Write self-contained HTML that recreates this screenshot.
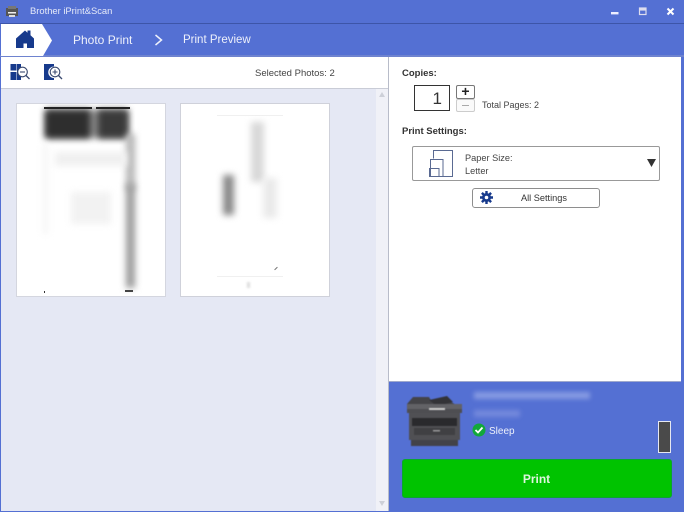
<!DOCTYPE html>
<html><head><meta charset="utf-8">
<style>
html,body{margin:0;padding:0}
body{width:684px;height:512px;position:relative;overflow:hidden;background:#5470d3;font-family:"Liberation Sans",sans-serif;color:#333}
.a{position:absolute}
.t{position:absolute;white-space:nowrap;font-size:10px;line-height:12px}
.b{filter:blur(3.5px)}
</style></head><body>
<div class="a" style="left:0;top:23px;width:684px;height:1px;background:#3d55a8"></div>
<svg class="a" style="left:5px;top:5px" width="14" height="14" viewBox="0 0 14 14"><rect x="1" y="3" width="12" height="8" fill="#555"/><rect x="3" y="1" width="8" height="3" fill="#777"/><rect x="3" y="7" width="8" height="1.5" fill="#eee"/><rect x="4" y="10" width="6" height="2" fill="#ddd"/></svg>
<div class="t" style="left:30px;top:5px;color:#e6eaf8;font-size:9.4px">Brother iPrint&amp;Scan</div>
<svg class="a" style="left:610px;top:5px" width="70" height="14" viewBox="0 0 70 14"><rect x="1" y="7" width="7.500" height="2.400" fill="#eef"/><rect x="29.500" y="3" width="6.500" height="6.500" fill="none" stroke="#dde" stroke-width="1.200"/><rect x="29.500" y="3" width="6.500" height="2.600" fill="#dde"/><path d="M57.500 3.500l6 6M63.500 3.500l-6 6" stroke="#fff" stroke-width="2"/></svg>

<div class="a" style="left:0;top:55px;width:684px;height:2px;background:#6e83cf"></div>
<svg class="a" style="left:0;top:24px" width="54" height="33" viewBox="0 0 54 33"><path d="M1 0H42L52 16.500L43 32H1Z" fill="#fff"/></svg>
<svg class="a" style="left:15px;top:29px" width="20" height="20" viewBox="0 0 20 20"><path d="M1 9.500L10 1.500L12.500 3.700V1.500H15.500V6.300L19 9.500V19H12V14.500H8.500V19H1Z" fill="#173a8c"/></svg>
<div class="t" style="left:73px;top:32px;color:#eef1fb;font-size:12px;line-height:16px">Photo Print</div>
<svg class="a" style="left:153px;top:33px" width="12" height="14" viewBox="0 0 12 14"><path d="M2.500 2L8.500 7L2.500 12" fill="none" stroke="#eef1fb" stroke-width="1.500"/></svg>
<div class="t" style="left:183px;top:32px;color:#eef1fb;font-size:11.500px;line-height:16px">Print Preview</div>

<div class="a" style="left:1px;top:57px;width:387px;height:31px;background:#fff;border-bottom:1px solid #c9ccd6"></div>
<div class="a" style="left:1px;top:89px;width:387px;height:422px;background:#e5e8f4"></div>
<div class="a" style="left:376px;top:89px;width:12px;height:422px;background:#f0f1f7"></div>
<div class="a" style="left:388px;top:57px;width:1px;height:454px;background:#b8bcc9"></div>
<svg class="a" style="left:377px;top:90px" width="10" height="422" viewBox="0 0 10 422"><path d="M2 7L5 2L8 7Z" fill="#cdd0d8"/><path d="M2 411L8 411L5 416Z" fill="#cdd0d8"/></svg>

<svg class="a" style="left:10px;top:63px" width="20" height="18" viewBox="0 0 20 18"><rect x="0.500" y="1" width="6" height="6.500" fill="#173a8c"/><rect x="0.500" y="9" width="6" height="8" fill="#173a8c"/><rect x="7" y="1" width="4" height="16" fill="#173a8c"/><circle cx="12.500" cy="9" r="4.800" fill="#fff" stroke="#39496f" stroke-width="1.100"/><path d="M10 9H15" stroke="#39496f" stroke-width="1.100"/><path d="M16 12.500L19.500 16" stroke="#39496f" stroke-width="1.300"/></svg>
<svg class="a" style="left:44px;top:63px" width="20" height="18" viewBox="0 0 20 18"><path d="M0 1H10V3.500A5.500 5.500 0 0 0 10 15V17H0Z" fill="#173a8c"/><circle cx="11" cy="9" r="4.800" fill="#fff" stroke="#39496f" stroke-width="1.100"/><path d="M8.500 9H13.500M11 6.500V11.500" stroke="#39496f" stroke-width="1.100"/><path d="M14.500 12.500L18 16" stroke="#39496f" stroke-width="1.300"/></svg>
<div class="t" style="left:255px;top:68px;color:#444;font-size:9.500px">Selected Photos: 2</div>

<div class="a" style="left:16px;top:103px;width:148px;height:192px;background:#fff;border:1px solid #d4d6df;overflow:hidden">
 <div class="a b" style="left:29px;top:6px;width:82px;height:28px;background:#8a8a8a"></div>
 <div class="a b" style="left:28px;top:6px;width:45px;height:28px;background:#2e2e2e"></div>
 <div class="a b" style="left:81px;top:6px;width:30px;height:28px;background:#3a3a3a"></div>
 <div class="a" style="left:27px;top:3px;width:48px;height:2px;background:#222"></div>
 <div class="a" style="left:79px;top:3px;width:34px;height:2px;background:#222"></div>
 <div class="a b" style="left:109px;top:30px;width:9px;height:56px;background:#b5b5b5"></div>
 <div class="a b" style="left:109px;top:80px;width:9px;height:104px;background:#9a9a9a"></div>
 <div class="a b" style="left:38px;top:48px;width:72px;height:14px;background:#f0f0f0"></div>
 <div class="a b" style="left:54px;top:88px;width:40px;height:32px;background:#f2f2f2"></div>
 <div class="a b" style="left:26px;top:40px;width:5px;height:90px;background:#f5f5f5"></div>
 <div class="a" style="left:27px;top:187px;width:1px;height:2px;background:#333"></div>
 <div class="a" style="left:108px;top:186px;width:8px;height:2px;background:#444"></div>
</div>
<div class="a" style="left:180px;top:103px;width:148px;height:192px;background:#fff;border:1px solid #cfd1da;overflow:hidden">
 <div class="a" style="left:36px;top:11px;width:66px;height:1px;background:#f0f0f0"></div>
 <div class="a b" style="left:42px;top:71px;width:11px;height:40px;background:#888"></div>
 <div class="a b" style="left:70px;top:18px;width:13px;height:60px;background:#d8d8d8"></div>
 <div class="a b" style="left:82px;top:74px;width:14px;height:40px;background:#eaeaea"></div>
 <div class="a" style="left:36px;top:172px;width:66px;height:1px;background:#f0f0f0"></div>
 <div class="a" style="left:93px;top:164px;width:4px;height:1px;background:#777;transform:rotate(-45deg)"></div>
 <div class="a" style="left:66px;top:178px;width:3px;height:6px;background:#ddd;filter:blur(1px)"></div>
</div>

<div class="a" style="left:389px;top:57px;width:292px;height:324px;background:#fff;border-bottom:1px solid #9fa9cc"></div>
<div class="t" style="left:402px;top:68px;font-size:9.500px;font-weight:bold;color:#333">Copies:</div>
<div class="a" style="left:414px;top:85px;width:34px;height:24px;border:1px solid #333;background:#fff;font-size:17px;line-height:26px;text-align:right;color:#333;box-sizing:content-box"><span style="padding-right:7px">1</span></div>
<div class="a" style="left:456px;top:85px;width:17px;height:12px;border:1px solid #777;border-radius:2px;font-size:14px;font-weight:bold;line-height:11px;text-align:center;color:#222;background:#fff">+</div>
<div class="a" style="left:456px;top:99px;width:17px;height:11px;border:1px solid #ccc;border-radius:2px;background:#fafafa"><div class="a" style="left:5px;top:5px;width:7px;height:1px;background:#aaa"></div></div>
<div class="t" style="left:482px;top:99px;color:#444;font-size:9px">Total Pages: 2</div>
<div class="t" style="left:402px;top:126px;font-size:9.500px;font-weight:bold;color:#333">Print Settings:</div>
<div class="a" style="left:412px;top:146px;width:246px;height:33px;border:1px solid #999;border-radius:2px;background:#fff"></div>
<svg class="a" style="left:427px;top:148px" width="28" height="32" viewBox="0 0 28 32"><g fill="none" stroke="#5a6a92" stroke-width="1"><path d="M6.500 10.500V2.500H25.500V28.500H13"/><rect x="3.500" y="11.500" width="12.500" height="17"/><rect x="2.500" y="20.500" width="9.500" height="8"/></g></svg>
<div class="t" style="left:465px;top:152px;color:#444;font-size:9.200px;line-height:13px">Paper Size:<br>Letter</div>
<svg class="a" style="left:646px;top:158px" width="11" height="10" viewBox="0 0 11 10"><path d="M1 1H10L5.500 9Z" fill="#333"/></svg>
<div class="a" style="left:472px;top:188px;width:126px;height:18px;border:1px solid #8e8e8e;border-radius:3px;background:#fff"></div>
<svg class="a" style="left:480px;top:191px" width="13" height="13" viewBox="0 0 13 13"><path d="M6.500 0V13M0 6.500H13M1.900 1.900L11.100 11.100M11.100 1.900L1.900 11.100" stroke="#173a8c" stroke-width="2.400"/><circle cx="6.500" cy="6.500" r="4.500" fill="#173a8c"/><circle cx="6.500" cy="6.500" r="1.800" fill="#fff"/></svg>
<div class="t" style="left:521px;top:192px;color:#333;font-size:9.200px">All Settings</div>

<div class="a" style="left:681px;top:57px;width:3px;height:455px;background:#5470d3"></div>

<svg class="a" style="left:405px;top:394px;filter:blur(.6px)" width="59" height="54" viewBox="0 0 59 54"><path d="M2 10L8 3H24L27 8L46 8L57 14V19H2Z" fill="#444448"/><path d="M24 6L42 2L48 8L32 12Z" fill="#333337"/><path d="M2 10H57V19L2 19Z" fill="#626266"/><path d="M2 15H57V19H2Z" fill="#4e4e52"/><rect x="24" y="14" width="16" height="2" fill="#ccc"/><rect x="4" y="19" width="51" height="27" fill="#505054"/><rect x="7" y="24" width="45" height="8" fill="#2a2a2d"/><rect x="9" y="34" width="41" height="7" fill="#404043"/><rect x="28" y="36" width="7" height="1.500" fill="#999"/><rect x="6" y="46" width="47" height="6" fill="#42424a"/></svg>
<div class="a b" style="left:474px;top:392px;width:116px;height:7px;background:#869ae2;filter:blur(2.500px)"></div>
<div class="a b" style="left:474px;top:410px;width:46px;height:7px;background:#7489dc;filter:blur(2.500px)"></div>
<svg class="a" style="left:472px;top:423px" width="14" height="14" viewBox="0 0 14 14"><circle cx="7" cy="7" r="6.500" fill="#12a83a"/><path d="M3.500 7L6 9.500L10.500 4.500" fill="none" stroke="#fff" stroke-width="1.800"/></svg>
<div class="t" style="left:489px;top:426px;color:#eef1fb;font-size:10px">Sleep</div>
<div class="a" style="left:658px;top:421px;width:11px;height:30px;background:#4a4a4a;border:1px solid #e6e8f0"></div>
<div class="a" style="left:402px;top:459px;width:268px;height:37px;background:#00c300;border:1px solid #0aa52e;border-radius:3px;color:#dff5df;font-weight:bold;font-size:12px;line-height:38px;text-align:center;text-indent:-1px">Print</div>
</body></html>
